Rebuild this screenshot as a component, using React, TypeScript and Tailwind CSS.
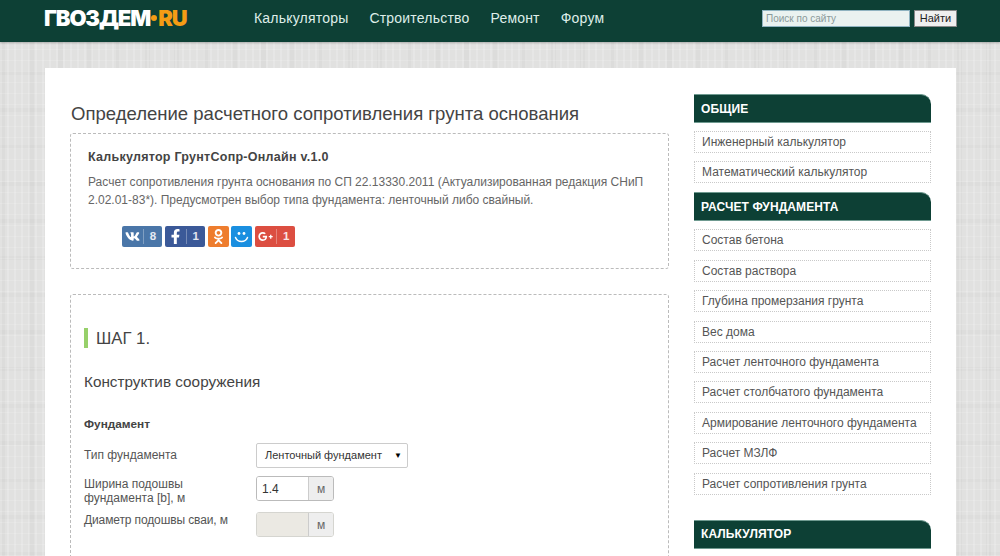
import React from "react";
import { FaVk, FaFacebookF, FaOdnoklassniki, FaGooglePlusG } from "react-icons/fa";

const font = "font-['Liberation_Sans',Arial,sans-serif]";

const groups = [
  { title: "ОБЩИЕ", items: ["Инженерный калькулятор", "Математический калькулятор"] },
  {
    title: "РАСЧЕТ ФУНДАМЕНТА",
    items: [
      "Состав бетона",
      "Состав раствора",
      "Глубина промерзания грунта",
      "Вес дома",
      "Расчет ленточного фундамента",
      "Расчет столбчатого фундамента",
      "Армирование ленточного фундамента",
      "Расчет МЗЛФ",
      "Расчет сопротивления грунта",
    ],
  },
];

function SideHead({ title }: { title: string }) {
  return (
    <div className="h-[29px] bg-[#0d4035] rounded-tr-[10px] border-b border-t border-[#6f9a90] border-l-0 flex items-center pl-[7px] text-white text-[12px] font-bold tracking-[0.1px]">
      {title}
    </div>
  );
}

function SideItem({ text }: { text: string }) {
  return (
    <div className="h-[22px] border border-dotted border-[#c9c9c9] flex items-center pl-[7px] text-[12px] text-[#555]">
      {text}
    </div>
  );
}

function Share({ w, bg, icon, count }: { w: string; bg: string; icon: React.ReactNode; count?: string }) {
  return (
    <div className={`${w} ${bg} h-[21px] rounded-[2px] flex items-center text-white`}>
      <div className={`h-full flex items-center justify-center ${count ? "w-[21px]" : "w-full"}`}>{icon}</div>
      {count && (
        <div className="flex-1 h-[15px] border-l border-white/30 flex items-center justify-center text-[11.5px] font-bold text-white/85">
          {count}
        </div>
      )}
    </div>
  );
}

function Unit({ disabled, value }: { disabled?: boolean; value?: string }) {
  return (
    <div className={`flex w-[78px] h-[25px] rounded-[3px] border overflow-hidden ${disabled ? "border-[#d5d5d0]" : "border-[#bbb]"}`}>
      <div className={`w-[51px] h-full flex items-center pl-[5px] pt-[1px] text-[12px] text-[#333] ${disabled ? "bg-[#ebe9e3]" : "bg-white"}`}>
        {value}
      </div>
      <div className="flex-1 bg-[#eeeeee] border-l border-[#ccc] flex items-center justify-center text-[12px] text-[#666]">м</div>
    </div>
  );
}

export default function App() {
  return (
    <div
      className={`${font} h-[556px] w-[1000px] overflow-hidden bg-[#e1e1e0] bg-[repeating-linear-gradient(90deg,rgba(255,255,255,0.18)_0px,rgba(255,255,255,0.18)_2px,transparent_2px,transparent_7px),repeating-linear-gradient(0deg,rgba(255,255,255,0.14)_0px,rgba(255,255,255,0.14)_1px,transparent_1px,transparent_11px),repeating-linear-gradient(90deg,rgba(0,0,0,0.025)_0px,rgba(0,0,0,0.025)_5px,transparent_5px,transparent_29px),repeating-linear-gradient(0deg,rgba(0,0,0,0.02)_0px,rgba(0,0,0,0.02)_4px,transparent_4px,transparent_37px)]`}
    >
      <header className="h-[42px] bg-[#0d4035] shadow-[0_1px_2px_rgba(0,0,0,0.25)] flex items-start">
        <div className="ml-[44px] w-[210px] mt-[5px] flex items-center text-[22px] leading-[26px] font-bold font-['Inter',sans-serif] tracking-[-1.1px]">
          <span className="text-white font-black">ГВОЗДЕМ</span>
          <span className="w-[6px] h-[6px] rounded-full bg-[#f59c14] mx-[1px]" />
          <span className="text-[#f59c14] font-black">RU</span>
        </div>
        <nav className="flex gap-[21px] mt-[10px] text-[14px] leading-[16px] text-[#dfeee9] tracking-[0.2px]">
          <span>Калькуляторы</span>
          <span>Строительство</span>
          <span>Ремонт</span>
          <span>Форум</span>
        </nav>
        <div className="ml-auto mr-[43px] mt-[10px] flex gap-[4px]">
          <div className="w-[148px] h-[17px] bg-[#eaf2f0] border border-[#8fb3c0] flex items-center pl-[3px] text-[10px] text-[#8a9a9a]">Поиск по сайту</div>
          <div className="w-[43px] h-[17px] bg-[#efefef] border border-[#888] flex items-center justify-center text-[11px] text-[#222]">Найти</div>
        </div>
      </header>

      <main className="mt-[26px] ml-[45px] w-[911px] h-[488px] bg-white flex overflow-hidden">
        <div className="w-[599px] ml-[25px] shrink-0">
          <h1 className="mt-[34px] h-[23px] pl-[1px] text-[18.55px] leading-[23px] font-normal text-[#444]">
            Определение расчетного сопротивления грунта основания
          </h1>
          <section className="mt-[8px] h-[136px] border border-dashed border-[#bbb] rounded-[3px] pl-[17px] pt-[16px]">
            <div className="text-[12.5px] leading-[15px] font-bold text-[#444] tracking-[0.26px]">Калькулятор ГрунтСопр-Онлайн v.1.0</div>
            <p className="mt-[9px] w-[570px] text-[12px] leading-[17.5px] text-[#666]">
              Расчет сопротивления грунта основания по СП 22.13330.2011 (Актуализированная редакция СНиП 2.02.01-83*). Предусмотрен выбор типа фундамента: ленточный либо свайный.
            </p>
            <div className="mt-[17px] ml-[34px] flex gap-[2.8px]">
              <Share w="w-[40px]" bg="bg-[#4a76a8]" icon={<FaVk size={15} />} count="8" />
              <Share w="w-[40px]" bg="bg-[#3b5998]" icon={<FaFacebookF size={15} />} count="1" />
              <Share w="w-[21px]" bg="bg-[#ee7d2e]" icon={<FaOdnoklassniki size={15} />} />
              <Share
                w="w-[21px]"
                bg="bg-[#1a8fe0]"
                icon={
                  <svg width="15" height="12" viewBox="0 0 15 12" fill="none">
                    <circle cx="5" cy="2.5" r="1.4" fill="#fff" />
                    <circle cx="10" cy="2.5" r="1.4" fill="#fff" />
                    <path d="M1.5 6.5c1.2 3 3.4 4 6 4s4.8-1 6-4" stroke="#fff" strokeWidth="1.5" strokeLinecap="round" />
                  </svg>
                }
              />
              <Share w="w-[40px]" bg="bg-[#dc4e41]" icon={<FaGooglePlusG size={15} />} count="1" />
            </div>
          </section>
          <section className="mt-[25px] h-[300px] border border-dashed border-[#bbb] rounded-[3px] pl-[13px]">
            <div className="mt-[33px] h-[20px] border-l-[4px] border-[#97d06a] pl-[8px] text-[16.7px] leading-[21px] text-[#444]">ШАГ 1.</div>
            <div className="mt-[25px] text-[15.3px] leading-[18px] text-[#444]">Конструктив сооружения</div>
            <div className="mt-[26px] text-[11.8px] leading-[15px] font-bold text-[#444]">Фундамент</div>
            <div className="mt-[11px] flex h-[25px]">
              <div className="w-[172px] pt-[5px] text-[12px] leading-[15px] text-[#555]">Тип фундамента</div>
              <div className="w-[152px] h-[25px] border border-[#ccc] rounded-[2px] flex items-center pl-[8px] pr-[3px] text-[11px] text-[#333]">
                <span className="flex-1">Ленточный фундамент</span>
                <span className="text-[8px] text-black mr-[2px]">▼</span>
              </div>
            </div>
            <div className="mt-[8px] flex h-[25px]">
              <div className="w-[172px] pt-[1px] text-[12px] leading-[14px] text-[#555]">
                Ширина подошвы
                <br />
                фундамента [b], м
              </div>
              <Unit value="1.4" />
            </div>
            <div className="mt-[11px] flex h-[25px]">
              <div className="w-[172px] pt-[1px] text-[12px] leading-[14px] text-[#555] tracking-[-0.12px]">Диаметр подошвы сваи, м</div>
              <Unit disabled />
            </div>
          </section>
        </div>

        <aside className="w-[237px] ml-[25px] shrink-0 pt-[26px]">
          {groups.map((g) => (
            <div key={g.title} className="mb-[9px]">
              <SideHead title={g.title} />
              <div className="mt-[8px] flex flex-col gap-[8.4px]">
                {g.items.map((i) => (
                  <SideItem key={i} text={i} />
                ))}
              </div>
            </div>
          ))}
          <div className="mt-[25px]">
            <SideHead title="КАЛЬКУЛЯТОР" />
          </div>
        </aside>
      </main>
    </div>
  );
}
